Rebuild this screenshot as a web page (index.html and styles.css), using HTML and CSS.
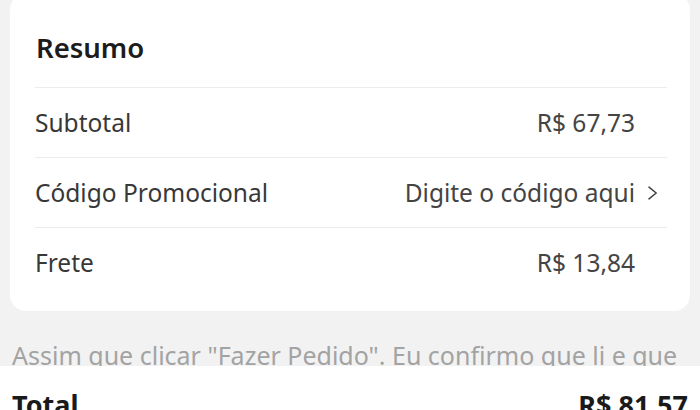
FILE: index.html
```html
<!DOCTYPE html>
<html lang="pt-BR">
<head>
<meta charset="utf-8">
<title>Resumo</title>
<link rel="stylesheet" href="styles.css">
</head>
<body>
<main class="page">
  <section class="card">
    <h2 class="card-title">Resumo</h2>
    <div class="row">
      <span class="label">Subtotal</span>
      <span class="value">R$ 67,73</span>
      <span class="chev-slot"></span>
    </div>
    <div class="row">
      <span class="label">Código Promocional</span>
      <span class="value">Digite o código aqui</span>
      <span class="chev-slot">
        <svg class="chev" width="11" height="14" viewBox="0 0 11 14"><path d="M2 1.2 L9.2 7 L2 12.8" fill="none" stroke="#454545" stroke-width="1.6" stroke-linecap="round" stroke-linejoin="round"/></svg>
      </span>
    </div>
    <div class="row">
      <span class="label">Frete</span>
      <span class="value">R$ 13,84</span>
      <span class="chev-slot"></span>
    </div>
  </section>
  <div class="disclaimer">
    <p>Assim que clicar "Fazer Pedido". Eu confirmo que li e que concordo com os termos e condições.</p>
  </div>
  <footer class="total-bar">
    <span class="total-label">Total</span>
    <span class="total-value">R$ 81,57</span>
  </footer>
</main>
</body>
</html>
```
FILE: styles.css
```css
html, body {
  margin: 0;
  padding: 0;
  background: #f2f2f2;
  font-family: "Noto Sans", "Open Sans", sans-serif;
}
.page {
  width: 700px;
  height: 410px;
  overflow: hidden;
  display: flex;
  flex-direction: column;
}
.card {
  margin: -6px 10px 0 10px;
  background: #ffffff;
  border-radius: 16px;
  padding: 0 23px 14px 25px;
  flex: none;
}
.card-title {
  margin: 0;
  height: 93px;
  box-sizing: border-box;
  padding: 14px 0 0 1px;
  display: flex;
  align-items: center;
  font-size: 27.5px;
  font-weight: 600;
  color: #1c1c1c;
}
.row {
  height: 70px;
  box-sizing: border-box;
  border-top: 1px solid #ececec;
  display: flex;
  align-items: center;
  font-size: 24.5px;
}
.label {
  flex: 1;
  color: #383838;
}
.value {
  color: #444444;
}
.chev-slot {
  width: 23px;
  height: 24px;
  display: flex;
  align-items: center;
  justify-content: flex-end;
  padding-right: 9px;
}
.chev {
  display: block;
}
.disclaimer {
  height: 55px;
  overflow: hidden;
  flex: none;
  padding: 0 12px;
}
.disclaimer p {
  margin: 0;
  padding-top: 27px;
  font-size: 25px;
  line-height: 34px;
  color: #a3a3a3;
}
.total-bar {
  flex: 1;
  background: #ffffff;
  display: flex;
  justify-content: space-between;
  align-items: flex-start;
  padding: 20px 12px 0 12px;
  font-size: 27px;
  font-weight: 700;
  color: #1a1a1a;
}
```
